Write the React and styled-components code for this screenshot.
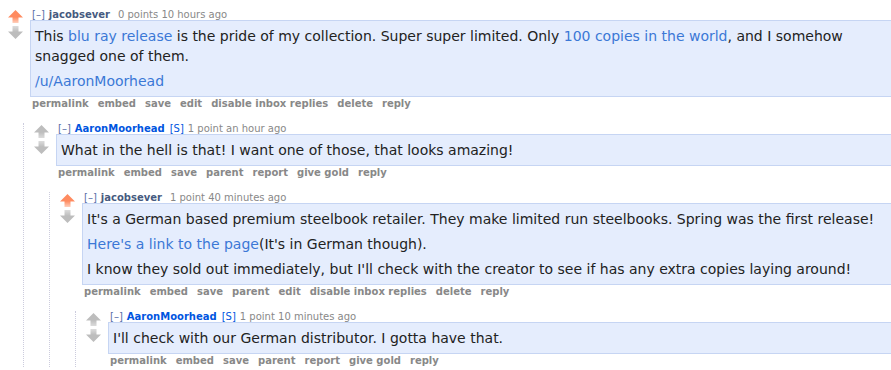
import React from "react";
import styled, { createGlobalStyle } from "styled-components";

const Global = createGlobalStyle`
  html, body { margin: 0; padding: 0; background: #fff; overflow: hidden; }
  body { font-family: "DejaVu Sans", Verdana, sans-serif; }
`;

const Page = styled.div`
  padding: 9px 0 0 8px;
`;

const CommentRow = styled.div`
  display: flex;
  align-items: flex-start;
`;

const Midcol = styled.div`
  width: 22px;
  flex: 0 0 22px;
  display: flex;
  flex-direction: column;
  gap: 2px;
  padding-top: ${(p) => p.$top}px;
`;

const Entry = styled.div`
  flex: 1;
  min-width: 0;
`;

const Tagline = styled.div`
  font-size: 10px;
  line-height: 11px;
  color: #888;
  padding-left: 2px;
  white-space: nowrap;
`;

const Expand = styled.span`
  color: #5a6ea8;
  margin-right: 4px;
`;

const Author = styled.span`
  font-weight: bold;
  color: ${(p) => (p.$op ? "#0055df" : "#465a80")};
  margin-right: ${(p) => (p.$op ? 5 : 8)}px;
`;

const Flair = styled.span`
  color: #0055df;
  margin-right: 4px;
`;

const Body = styled.div`
  background: #e5edfd;
  border: 1px solid #c6d5f3;
  border-right: none;
  padding: 0 4px;
`;

const Md = styled.div`
  font-size: 14px;
  line-height: 20px;
  color: #222;
`;

const P = styled.p`
  margin: 5px 0;
`;

const A = styled.a`
  color: #3b78d6;
  text-decoration: none;
`;

const FlatList = styled.ul`
  list-style: none;
  margin: 1px 0 0;
  padding: 0 0 0 2px;
  display: flex;
  gap: 9px;
  font-size: 10px;
  line-height: 12px;
  font-weight: bold;
  color: #888;
  white-space: nowrap;
`;

const Child = styled.div`
  margin: 13px 0 0 15px;
  border-left: 1px dotted #ccd;
  padding-left: 10px;
`;

const colors = {
  up: { solid: "#ff8b60", light: "#ffd0bd" },
  grey: { solid: "#bdbdbd", light: "#dcdcdc" },
};

function Arrow({ dir, tone }) {
  const c = colors[tone];
  const id = `g-${dir}-${tone}`;
  const upPath = "M7.5 0 L15 7.5 L10.5 7.5 L10.5 13 L4.5 13 L4.5 7.5 L0 7.5 Z";
  const downPath = "M4.5 0 L10.5 0 L10.5 5.5 L15 5.5 L7.5 13 L0 5.5 L4.5 5.5 Z";
  return (
    <svg width="15" height="14" viewBox="0 0 15 14">
      <defs>
        <linearGradient id={id} x1="0" y1="0" x2="0" y2="1">
          {dir === "up" ? (
            <>
              <stop offset="0" stopColor={c.solid} />
              <stop offset="0.55" stopColor={c.solid} />
              <stop offset="1" stopColor={c.light} />
            </>
          ) : (
            <>
              <stop offset="0" stopColor={c.light} />
              <stop offset="0.45" stopColor={c.solid} />
              <stop offset="1" stopColor={c.solid} />
            </>
          )}
        </linearGradient>
      </defs>
      <path d={dir === "up" ? upPath : downPath} fill={`url(#${id})`} />
    </svg>
  );
}

function Comment({ author, op, score, time, upvoted, arrowTop, paras, actions, children }) {
  return (
    <div>
      <CommentRow>
        <Midcol $top={arrowTop}>
          <Arrow dir="up" tone={upvoted ? "up" : "grey"} />
          <Arrow dir="down" tone="grey" />
        </Midcol>
        <Entry>
          <Tagline>
            <Expand>[–]</Expand>
            <Author $op={op}>{author}</Author>
            {op && <Flair>[S]</Flair>}
            {score} {time}
          </Tagline>
          <Body>
            <Md>
              {paras.map((p, i) => (
                <P key={i}>{p}</P>
              ))}
            </Md>
          </Body>
          <FlatList>
            {actions.map((a) => (
              <li key={a}>{a}</li>
            ))}
          </FlatList>
        </Entry>
      </CommentRow>
      {children && <Child>{children}</Child>}
    </div>
  );
}

const ownActions = ["permalink", "embed", "save", "edit", "disable inbox replies", "delete", "reply"];
const otherActions = ["permalink", "embed", "save", "parent", "report", "give gold", "reply"];
const ownChildActions = ["permalink", "embed", "save", "parent", "edit", "disable inbox replies", "delete", "reply"];

export default function App() {
  return (
    <>
      <Global />
      <Page>
        <Comment
          author="jacobsever"
          score="0 points"
          time="10 hours ago"
          upvoted
          arrowTop={1}
          actions={ownActions}
          paras={[
            <>
              This <A href="#">blu ray release</A> is the pride of my collection. Super super limited. Only{" "}
              <A href="#">100 copies in the world</A>, and I somehow snagged one of them.
            </>,
            <A href="#">/u/AaronMoorhead</A>,
          ]}
        >
          <Comment
            author="AaronMoorhead"
            op
            score="1 point"
            time="an hour ago"
            arrowTop={2}
            actions={otherActions}
            paras={["What in the hell is that! I want one of those, that looks amazing!"]}
          >
            <Comment
              author="jacobsever"
              score="1 point"
              time="40 minutes ago"
              upvoted
              arrowTop={2}
              actions={ownChildActions}
              paras={[
                "It's a German based premium steelbook retailer. They make limited run steelbooks. Spring was the first release!",
                <>
                  <A href="#">Here's a link to the page</A>(It's in German though).
                </>,
                "I know they sold out immediately, but I'll check with the creator to see if has any extra copies laying around!",
              ]}
            >
              <Comment
                author="AaronMoorhead"
                op
                score="1 point"
                time="10 minutes ago"
                arrowTop={2}
                actions={otherActions}
                paras={["I'll check with our German distributor. I gotta have that."]}
              />
            </Comment>
          </Comment>
        </Comment>
      </Page>
    </>
  );
}
